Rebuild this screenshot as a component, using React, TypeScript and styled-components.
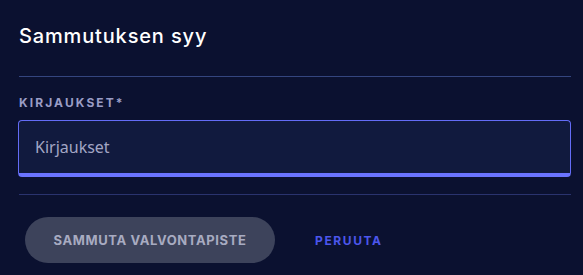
import React from "react";
import styled, { createGlobalStyle } from "styled-components";

const Global = createGlobalStyle`
  html, body { margin: 0; padding: 0; background: #0b1130; }
  body { font-family: Inter, "Noto Sans", sans-serif; }
  * { box-sizing: border-box; }
`;

const Dialog = styled.div`
  width: 583px;
  height: 275px;
  background: #0b1130;
  padding: 0 12px 0 19px;
  display: flex;
  flex-direction: column;
`;

const Title = styled.h2`
  margin: 0;
  padding-top: 24px;
  height: 76px;
  font-family: Inter, sans-serif;
  font-weight: 500;
  font-size: 20px;
  line-height: 24px;
  color: #ffffff;
  letter-spacing: 0.85px;
`;

const Divider = styled.hr<{ $tone: string }>`
  margin: 0;
  border: none;
  height: 1px;
  background: ${(p) => p.$tone};
`;

const Body = styled.div`
  padding: 19px 0 17px;
  display: flex;
  flex-direction: column;
  gap: 10px;
`;

const Label = styled.label`
  font-family: Inter, sans-serif;
  font-weight: 700;
  font-size: 12px;
  line-height: 14px;
  letter-spacing: 2.1px;
  color: #9a9dc6;
  text-transform: uppercase;
`;

const Input = styled.input`
  width: 553px;
  height: 57px;
  margin-left: -1px;
  background: #111a3e;
  border: 1px solid #646cf6;
  border-bottom: 4px solid #6b74ff;
  border-radius: 4px;
  padding: 0 16px 0 16px;
  font-family: "Noto Sans", sans-serif;
  font-size: 16px;
  color: #ffffff;
  caret-color: #ffffff;
  outline: none;
  &::placeholder { color: #a3a6c4; }
`;

const Actions = styled.div`
  display: flex;
  align-items: center;
  gap: 40px;
  padding: 22px 0 0 6px;
`;

const PrimaryButton = styled.button`
  width: 250px;
  height: 46px;
  border: none;
  border-radius: 23px;
  background: #3d435b;
  color: #a8abc1;
  font-family: Inter, sans-serif;
  font-weight: 700;
  font-size: 13px;
  letter-spacing: 0.6px;
  text-transform: uppercase;
  cursor: default;
`;

const TextButton = styled.button`
  border: none;
  background: none;
  padding: 0;
  color: #4c56ec;
  font-family: Inter, sans-serif;
  font-weight: 700;
  font-size: 12px;
  letter-spacing: 1.6px;
  text-transform: uppercase;
`;

export default function App() {
  return (
    <>
      <Global />
      <Dialog>
        <Title>Sammutuksen syy</Title>
        <Divider $tone="#34457f" />
        <Body>
          <Label htmlFor="kirjaukset">Kirjaukset*</Label>
          <Input id="kirjaukset" placeholder="Kirjaukset" autoFocus />
        </Body>
        <Divider $tone="#2a336e" />
        <Actions>
          <PrimaryButton>Sammuta valvontapiste</PrimaryButton>
          <TextButton>Peruuta</TextButton>
        </Actions>
      </Dialog>
    </>
  );
}
